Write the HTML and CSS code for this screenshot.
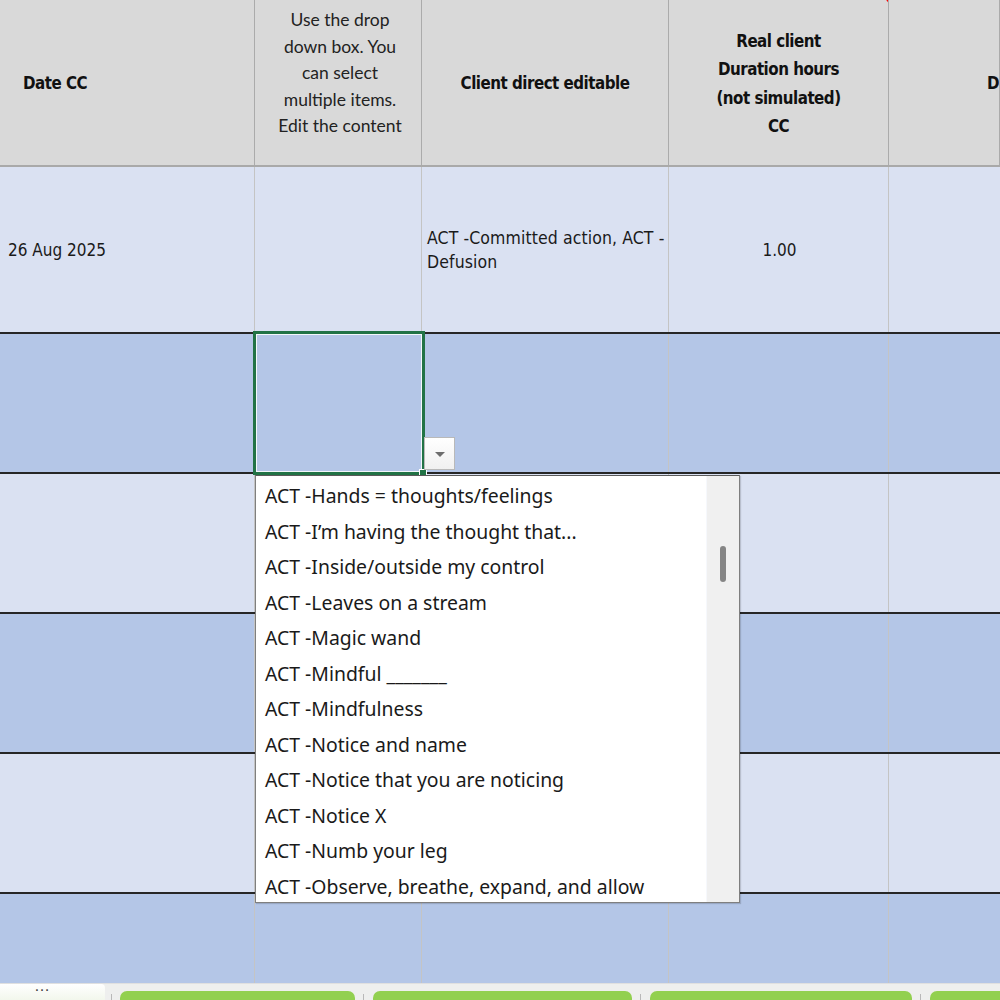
FILE: index.html
```html
<!DOCTYPE html>
<html>
<head>
<meta charset="utf-8">
<link rel="stylesheet" href="styles.css">
</head>
<body>
<div class="sheet">
  <div class="row head">
    <div class="cell c1 hleft"><span class="hb">Date CC</span></div>
    <div class="cell c2 hnote">Use the drop<br>down box. You<br>can select<br>multiple items.<br>Edit the content</div>
    <div class="cell c3 hcenter"><span class="hb">Client direct editable</span></div>
    <div class="cell c4 hcenter hb tall">Real client<br>Duration hours<br>(not simulated)<br>CC<span class="comment"></span></div>
    <div class="cell c5 hleft"><span class="hb d">D</span></div>
  </div>
  <div class="row r1 light">
    <div class="cell c1 dleft">26 Aug 2025</div>
    <div class="cell c2"></div>
    <div class="cell c3 dwrap">ACT -Committed action, ACT -<br>Defusion</div>
    <div class="cell c4 dcenter">1.00</div>
    <div class="cell c5"></div>
  </div>
  <div class="row rn dark">
    <div class="cell c1"></div><div class="cell c2"></div><div class="cell c3"></div><div class="cell c4"></div><div class="cell c5"></div>
  </div>
  <div class="row rn light">
    <div class="cell c1"></div><div class="cell c2"></div><div class="cell c3"></div><div class="cell c4"></div><div class="cell c5"></div>
  </div>
  <div class="row rn dark">
    <div class="cell c1"></div><div class="cell c2"></div><div class="cell c3"></div><div class="cell c4"></div><div class="cell c5"></div>
  </div>
  <div class="row rn light">
    <div class="cell c1"></div><div class="cell c2"></div><div class="cell c3"></div><div class="cell c4"></div><div class="cell c5"></div>
  </div>
  <div class="row rlast dark">
    <div class="cell c1"></div><div class="cell c2"></div><div class="cell c3"></div><div class="cell c4"></div><div class="cell c5"></div>
  </div>
  <div class="tabs">
    <div class="tab-white"><span class="dots">…</span></div>
    <div class="sep first"></div>
    <div class="tab-green w1"></div>
    <div class="sep"></div>
    <div class="tab-green w2"></div>
    <div class="sep"></div>
    <div class="tab-green w3"></div>
    <div class="sep"></div>
    <div class="tab-green w4"></div>
  </div>

  <div class="selection"><div class="sel-inner"></div><div class="handle"></div></div>
  <div class="dd-button"><svg width="10" height="6" viewBox="0 0 10 6"><path d="M0 0 L10 0 L5 5 Z" fill="#6d6d6d"/></svg></div>
  <div class="dropdown">
    <ul class="items">
      <li>ACT -Hands = thoughts/feelings</li>
      <li>ACT -I’m having the thought that...</li>
      <li>ACT -Inside/outside my control</li>
      <li>ACT -Leaves on a stream</li>
      <li>ACT -Magic wand</li>
      <li>ACT -Mindful _______</li>
      <li>ACT -Mindfulness</li>
      <li>ACT -Notice and name</li>
      <li>ACT -Notice that you are noticing</li>
      <li>ACT -Notice X</li>
      <li>ACT -Numb your leg</li>
      <li>ACT -Observe, breathe, expand, and allow</li>
    </ul>
    <div class="scroll"><div class="thumb"></div></div>
  </div>
</div>
</body>
</html>
```
FILE: styles.css
```css
html, body {
  margin: 0;
  padding: 0;
  background: #ffffff;
}
.sheet {
  position: relative;
  width: 1000px;
  height: 1000px;
  overflow: hidden;
  font-family: "Liberation Sans Narrow", "DejaVu Sans Condensed", "Liberation Sans", sans-serif;
  color: #1a1a1a;
}
.row {
  display: grid;
  grid-template-columns: 255px 167px 247px 220px 1fr;
  box-sizing: border-box;
  width: 1000px;
}
.head {
  height: 167px;
  background: #d9d9d9;
  border-bottom: 2px solid #a9a9a9;
}
.r1 { height: 167px; border-bottom: 2px solid #262626; }
.rn { height: 140px; border-bottom: 2px solid #262626; }
.rlast { height: 89px; }
.light { background: #dae1f2; }
.dark { background: #b4c6e7; }
.cell {
  box-sizing: border-box;
  border-right: 1px solid #c4c4c4;
  position: relative;
  display: flex;
  align-items: center;
  overflow: hidden;
}
.head .cell { border-right: 1px solid #ababab; }
.c5 { border-right: none; }
.hb {
  font-weight: bold;
  font-size: 16.8px;
  letter-spacing: -0.5px;
  color: #111;
}
.hleft { padding-left: 23px; }
.c5.hleft { padding-left: 98px; }
.hcenter {
  justify-content: center;
  text-align: center;
}
.tall {
  line-height: 28.5px;
  padding-top: 2px;
}
.hnote {
  justify-content: center;
  text-align: center;
  font-family: "Lato", "Open Sans", sans-serif;
  font-size: 17.5px;
  line-height: 26.5px;
  color: #222;
  align-items: flex-start;
  padding-top: 7px;
  padding-left: 4px;
}
.comment {
  position: absolute;
  right: -2px;
  top: -3px;
  width: 0;
  height: 0;
  border-left: 6px solid transparent;
  border-top: 8px solid #ff0000;
}
.dleft {
  padding-left: 8px;
  font-size: 17px;
}
.dwrap {
  padding-left: 5px;
  font-size: 17.5px;
  line-height: 24px;
  white-space: nowrap;
  letter-spacing: 0.1px;
}
.dcenter {
  justify-content: center;
  font-size: 17px;
  padding-left: 2px;
}
.tabs {
  height: 17px;
  background: #eeefee;
  border-top: 1px solid #e0e0e0;
  display: flex;
  align-items: flex-end;
  box-sizing: border-box;
}
.tabs > div { flex-shrink: 0; }
.tab-white {
  width: 105px;
  height: 16px;
  background: linear-gradient(#ffffff, #f2f7ec);
  border-top-right-radius: 4px;
  position: relative;
  align-self: flex-start;
}
.dots {
  position: absolute;
  left: 34px;
  top: -6px;
  font-size: 16px;
  line-height: 16px;
  color: #444;
  font-family: "Liberation Sans", sans-serif;
}
.sep {
  width: 1px;
  height: 6px;
  background: #b8b8b8;
  margin: 0 9px 0 8px;
}
.sep.first { margin: 0 8px 0 6px; }
.tab-green {
  height: 9px;
  background: #92d050;
  border-radius: 7px 7px 0 0;
}
.w1 { width: 235px; }
.w2 { width: 259px; }
.w3 { width: 262px; }
.w4 { width: 80px; }

.selection {
  position: absolute;
  left: 253px;
  top: 331px;
  width: 172px;
  height: 144px;
  box-sizing: border-box;
  border: 3px solid #217346;
}
.sel-inner {
  position: absolute;
  inset: 0;
  border: 1px solid #f4f7fb;
}
.handle {
  position: absolute;
  right: -5px;
  bottom: -5px;
  width: 6px;
  height: 6px;
  background: #217346;
  border: 1px solid #ffffff;
}
.dd-button {
  position: absolute;
  left: 424px;
  top: 437px;
  width: 31px;
  height: 33px;
  box-sizing: border-box;
  border: 1px solid #b9b9b9;
  background: linear-gradient(#ffffff, #f0f0f0);
  display: flex;
  align-items: center;
  justify-content: center;
  padding-top: 3px;
}
.dropdown {
  position: absolute;
  left: 255px;
  top: 475px;
  width: 485px;
  height: 428px;
  box-sizing: border-box;
  background: #ffffff;
  border: 1px solid #7f7f7f;
  border-top-color: #5a5a5a;
  box-shadow: 1px 1px 1px rgba(0,0,0,0.15);
  display: flex;
}
.items {
  list-style: none;
  margin: 0;
  padding: 2px 0 0 9px;
  flex: 1;
  font-family: "Noto Sans", "Open Sans", sans-serif;
  font-size: 19.4px;
  color: #1a1a1a;
}
.items li {
  height: 35.5px;
  line-height: 35.5px;
  white-space: nowrap;
}
.scroll {
  width: 32px;
  background: #f0f0f0;
  border-left: 1px solid #f6f8fc;
  position: relative;
}
.thumb {
  position: absolute;
  left: 13px;
  top: 70px;
  width: 6px;
  height: 36px;
  border-radius: 3px;
  background: #858585;
}
```
